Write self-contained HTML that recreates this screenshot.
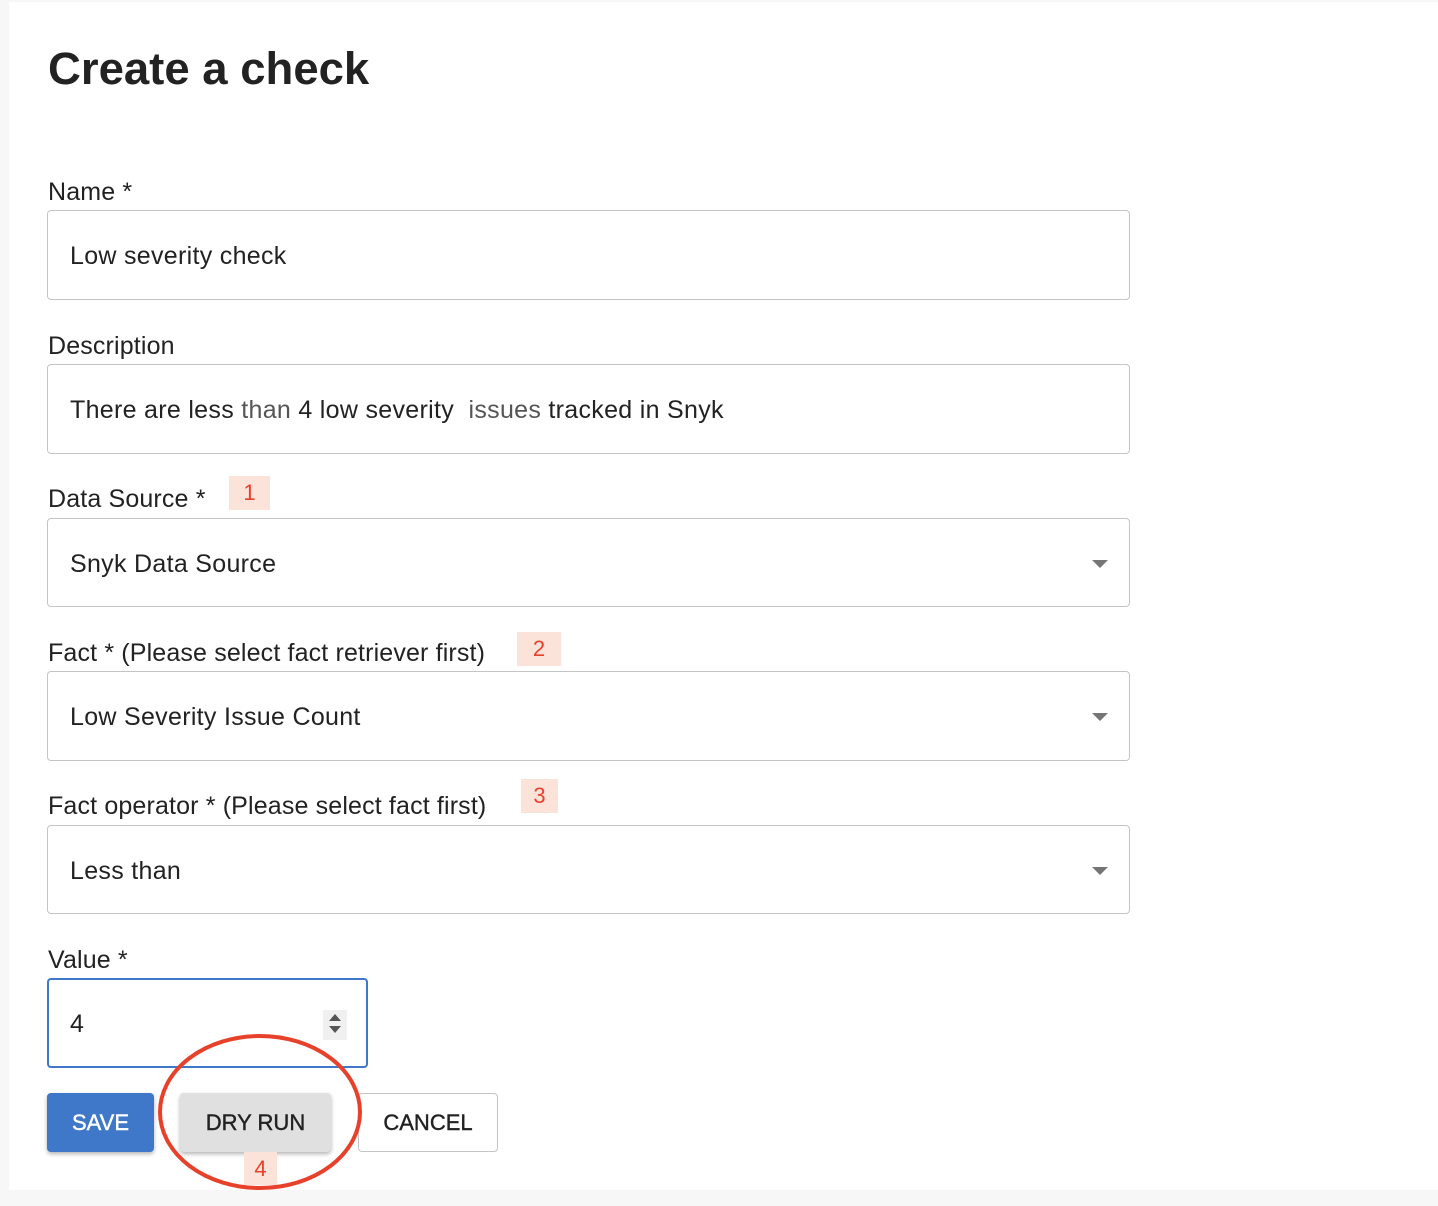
<!DOCTYPE html>
<html><head><meta charset="utf-8"><style>
body{margin:0;width:1438px;height:1206px;background:#f7f7f7;font-family:"Liberation Sans",Arial,sans-serif;color:#222;position:relative;overflow:hidden}
.panel{position:absolute;left:9px;top:2px;width:1429px;height:1188px;background:#fff}
.a{position:absolute}
h1{position:absolute;left:48px;top:43px;margin:0;font-size:45.5px;font-weight:bold;color:#222}
.lbl{position:absolute;left:48px;font-size:25px;letter-spacing:0.15px;color:#222;line-height:28px}
.inp{position:absolute;left:47px;width:1083px;height:88px;border:1px solid #c4c4c4;border-radius:4px;box-sizing:border-box}
.inp span.t{position:absolute;left:22px;top:31px;font-size:25px;letter-spacing:0.3px;line-height:28px;color:#222;white-space:nowrap}
.arr{position:absolute;right:21px;top:41px;width:0;height:0;border-left:8px solid transparent;border-right:8px solid transparent;border-top:8px solid #757575}
.badge{position:absolute;background:#fbe3da;color:#e8412b;font-size:22px;text-align:center}
.g{color:#555}
.btn{position:absolute;top:1093px;height:59px;box-sizing:border-box;border-radius:4px;font-size:22px;text-align:center;line-height:59px;-webkit-text-stroke:0.4px currentColor}
</style></head><body>
<div class="panel"></div>
<h1>Create a check</h1>

<div class="lbl" style="top:178px">Name *</div>
<div class="inp" style="top:210px;height:90px"><span class="t">Low severity check</span></div>

<div class="lbl" style="top:332px">Description</div>
<div class="inp" style="top:364px;height:90px"><span class="t">There are less <span class="g">than</span> 4 low severity &nbsp;<span class="g">issues</span> tracked in Snyk</span></div>

<div class="lbl" style="top:485px">Data Source *</div>
<div class="badge" style="left:229px;top:476px;width:41px;height:34px;line-height:34px">1</div>
<div class="inp" style="top:518px;height:89px"><span class="t">Snyk Data Source</span><div class="arr"></div></div>

<div class="lbl" style="top:639px">Fact * (Please select fact retriever first)</div>
<div class="badge" style="left:517px;top:632px;width:44px;height:34px;line-height:34px">2</div>
<div class="inp" style="top:671px;height:90px"><span class="t">Low Severity Issue Count</span><div class="arr"></div></div>

<div class="lbl" style="top:792px">Fact operator * (Please select fact first)</div>
<div class="badge" style="left:521px;top:779px;width:37px;height:34px;line-height:34px">3</div>
<div class="inp" style="top:825px;height:89px"><span class="t">Less than</span><div class="arr"></div></div>

<div class="lbl" style="top:946px">Value *</div>
<div class="inp" style="top:978px;width:321px;height:90px;border:2px solid #3f78c9"><span class="t" style="left:21px;top:30px">4</span>
<div class="a" style="left:274px;top:30px;width:24px;height:30px;background:#f0f0f0"></div>
<div class="a" style="left:280px;top:34px;border-left:6px solid transparent;border-right:6px solid transparent;border-bottom:7px solid #555"></div>
<div class="a" style="left:280px;top:46px;border-left:6px solid transparent;border-right:6px solid transparent;border-top:7px solid #555"></div>
</div>

<div class="btn" style="left:47px;width:107px;background:#3f78c9;color:#fff;box-shadow:0 2px 4px rgba(0,0,0,.3)">SAVE</div>
<div class="btn" style="left:180px;width:151px;background:#e0e0e0;color:#222;box-shadow:0 2px 4px rgba(0,0,0,.3)">DRY RUN</div>
<div class="btn" style="left:358px;width:140px;background:#fff;border:1px solid #c4c4c4;color:#222;line-height:57px">CANCEL</div>
<div class="badge" style="left:244px;top:1152px;width:33px;height:33px;line-height:33px">4</div>
<svg class="a" style="left:0;top:0" width="1438" height="1206"><ellipse cx="260" cy="1112" rx="100" ry="76" fill="none" stroke="#e8412b" stroke-width="4"/></svg>
</body></html>
